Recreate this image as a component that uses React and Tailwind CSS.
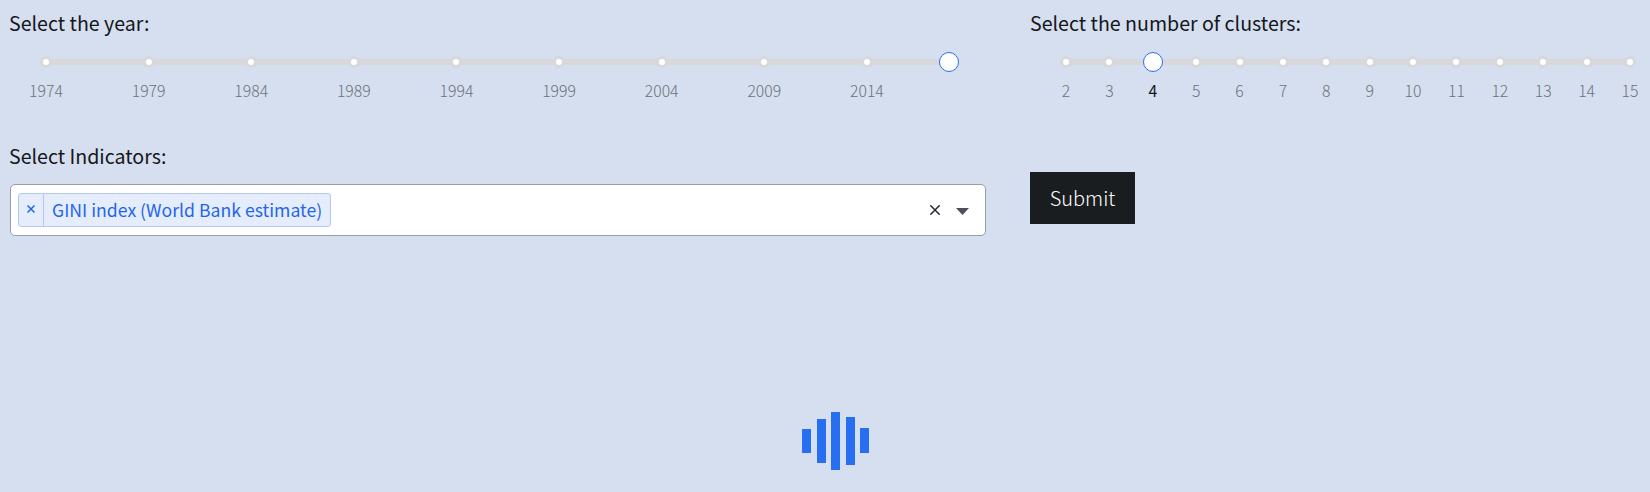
import React from "react";

const YEARS = [1974, 1979, 1984, 1989, 1994, 1999, 2004, 2009, 2014];
const CLUSTERS = [2, 3, 4, 5, 6, 7, 8, 9, 10, 11, 12, 13, 14, 15];

function Slider({ min, max, marks, value, className }) {
  const position = (v) => ({ left: `${((v - min) / (max - min)) * 100}%` });
  return (
    <div className={`relative h-[50px] ${className}`}>
      <div className="h-[6px] rounded-full bg-[#d7d8da]" />
      {marks.map((m) => (
        <React.Fragment key={m}>
          <span
            className="absolute -top-[3px] size-[12px] -translate-x-1/2 rounded-full border-[3px] border-[#d7d8da] bg-white"
            style={position(m)}
          />
          <span
            className={`absolute top-[20.5px] -translate-x-1/2 text-[15.8px] leading-[24px] ${
              m === value ? "font-normal text-[#14171a]" : "font-light text-[#6c727b]"
            }`}
            style={position(m)}
          >
            {m}
          </span>
        </React.Fragment>
      ))}
      <span
        className="absolute -top-[7px] size-[20px] -translate-x-1/2 rounded-full border-[1.5px] border-[#2b6df0] bg-white"
        style={position(value)}
      />
    </div>
  );
}

function Label({ children, className = "" }) {
  return (
    <div className={`whitespace-nowrap text-[19.6px] leading-[30px] text-[#14171a] ${className}`}>
      {children}
    </div>
  );
}

function Loader() {
  return (
    <svg width="68" height="60" viewBox="0 0 68 60" fill="#276ef1" aria-label="Loading">
      <rect x="0" y="18" width="9" height="24" />
      <rect x="15" y="8" width="9" height="44" />
      <rect x="29" y="1" width="9" height="58" />
      <rect x="44" y="6" width="9" height="48" />
      <rect x="58" y="17" width="9" height="25" />
    </svg>
  );
}

export default function App() {
  return (
    <main className="flex h-[492px] w-[1650px] flex-col overflow-hidden bg-[#d6dfef] font-['Noto_Sans_CJK_SC',sans-serif]">
      <div className="flex">
        <section className="w-[1030px] pl-[9px] pt-[8px]">
          <Label>Select the year:</Label>
          <Slider min={1974} max={2018} marks={YEARS} value={2018} className="ml-[37px] mt-[20.5px] w-[903px]" />
          <Label className="mt-[32.5px]">Select Indicators:</Label>
          <div className="ml-[1px] mt-[13px] flex h-[52px] w-[976px] items-center rounded-[5px] border border-[#969ca8] bg-white pl-[7px] pr-[16px]">
            <div className="flex h-[34px] w-[313px] items-stretch rounded-[3px] border border-[#b5c9ee] bg-[#e5edfc] text-[#1f66ec]">
              <button className="flex w-[25px] items-center justify-center border-r border-[#b5c9ee] pb-[3px]" aria-label="Remove">
                <svg width="8" height="8" viewBox="0 0 8 8" stroke="currentColor" strokeWidth="1.5">
                  <path d="M.5 .5 7.5 7.5M7.5 .5 .5 7.5" />
                </svg>
              </button>
              <span className="whitespace-nowrap pl-[8px] text-[17.65px] leading-[31px]">
                GINI index (World Bank estimate)
              </span>
            </div>
            <svg className="ml-auto" width="10" height="10" viewBox="0 0 10 10" stroke="#252b33" strokeWidth="1.5">
              <path d="M.3 .3 9.7 9.7M9.7 .3 .3 9.7" />
            </svg>
            <svg className="ml-[16px] mt-[2px]" width="13" height="7" viewBox="0 0 13 7" fill="#4c5158">
              <path d="M0 0H13L6.5 7Z" />
            </svg>
          </div>
        </section>
        <section className="flex w-[620px] flex-col items-start pt-[8px]">
          <Label>Select the number of clusters:</Label>
          <Slider min={2} max={15} marks={CLUSTERS} value={4} className="ml-[36px] mt-[20.5px] w-[564px]" />
          <button className="mt-[63.5px] h-[52px] w-[105px] bg-[#1a1d20] text-[20px] font-light text-white">
            Submit
          </button>
        </section>
      </div>
      <div className="mt-[175px] pl-[802px]">
        <Loader />
      </div>
    </main>
  );
}
